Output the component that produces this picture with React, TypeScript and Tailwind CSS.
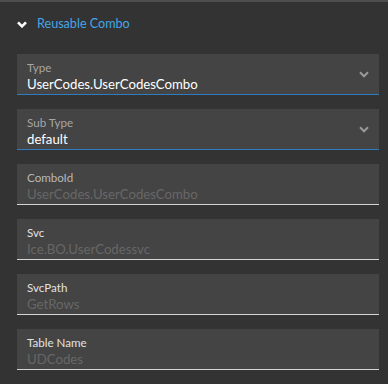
import { FC } from "react";

type Field = {
  label: string;
  value: string;
  select?: boolean;
  labelColor: string;
};

const fields: Field[] = [
  { label: "Type", value: "UserCodes.UserCodesCombo", select: true, labelColor: "text-[#a6a6a6]" },
  { label: "Sub Type", value: "default", select: true, labelColor: "text-[#a6a6a6]" },
  { label: "ComboId", value: "UserCodes.UserCodesCombo", labelColor: "text-[#b8b8b8]" },
  { label: "Svc", value: "Ice.BO.UserCodessvc", labelColor: "text-[#e2e2e2]" },
  { label: "SvcPath", value: "GetRows", labelColor: "text-[#e2e2e2]" },
  { label: "Table Name", value: "UDCodes", labelColor: "text-[#e2e2e2]" },
];

const Chevron = ({ className, width = 2 }: { className: string; width?: number }) => (
  <svg viewBox="0 0 10 7" className={className} fill="none">
    <path d="M1 1.3 5 5.3 9 1.3" stroke="currentColor" strokeWidth={width} />
  </svg>
);

const FieldBox: FC<{ field: Field }> = ({ field }) => {
  return (
    <div
      className={`relative h-[41px] bg-[#444444] border-b pl-[10px] pt-[7px] flex flex-col ${
        field.select ? "border-[#2f7cc0]" : "border-[#d4d4d4]"
      }`}
    >
      <span className={`text-[11.6px] leading-[14px] ${field.labelColor}`}>
        {field.label}
      </span>
      <span
        className={`text-[13.2px] leading-[18px] ${
          field.select ? "text-white" : "text-[#676767]"
        }`}
      >
        {field.value}
      </span>
      {field.select && (
        <Chevron className="absolute right-[10px] top-[17px] w-[10px] h-[7px] text-[#9a9a9a]" />
      )}
    </div>
  );
};

const App: FC = () => {
  return (
    <div className="w-[388px] h-[384px] bg-[#333333] border-t-2 border-[#4e4e4e] font-['Lato',sans-serif] overflow-hidden">
      <div className="h-[44px] flex items-center pl-[17px] gap-[10px]">
        <Chevron className="w-[10px] h-[7px] text-white" width={2.6} />
        <span className="text-[12.6px] text-[#45a6e6]">Reusable Combo</span>
      </div>
      <div className="mt-[8px] pl-[17px] pr-[9px] flex flex-col gap-[14px]">
        {fields.map((f) => (
          <FieldBox key={f.label} field={f} />
        ))}
      </div>
    </div>
  );
};

export default App;
